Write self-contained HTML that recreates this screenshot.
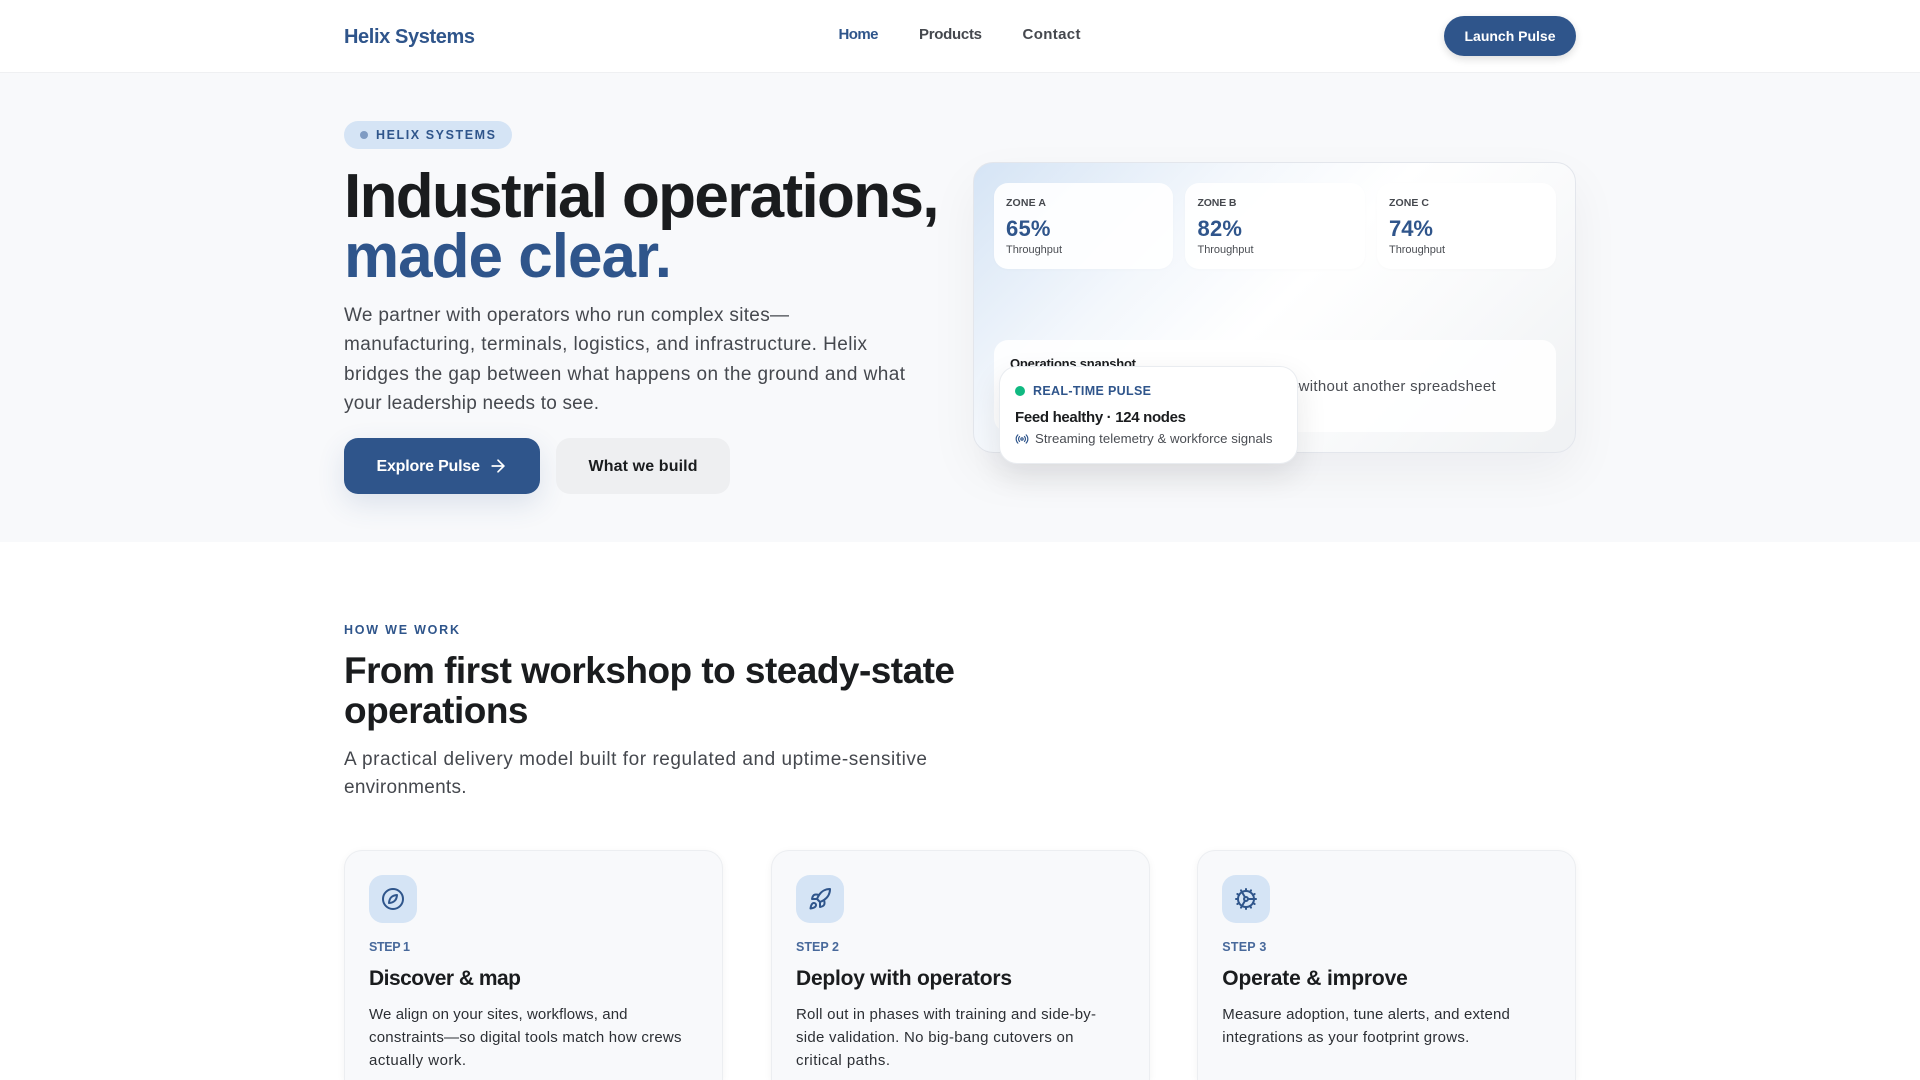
<!DOCTYPE html>
<html lang="en"><head><meta charset="utf-8"><title>Helix Systems</title>
<style>
*{box-sizing:border-box}
html,body{margin:0;padding:0;width:1920px;height:1080px;overflow:hidden;background:#fff;font-family:"Liberation Sans",sans-serif;color:#1a1c1e}
#root{position:relative;width:1920px;height:1080px;overflow:hidden;background:#fff}
.b{position:absolute}
.t{position:absolute;white-space:nowrap;line-height:20px;margin:0;font-weight:400}
.nb{font-weight:700}
.nav{font-size:15px;font-weight:700;color:#45484e}
.zl{font-size:10.5px;font-weight:700;color:#45484e}
.zv{font-size:22px;font-weight:700;color:#2f558b}
.zt{font-size:11px;color:#4a4d53}
.zone{position:absolute;top:183px;height:86px;background:rgba(255,255,255,.9);border-radius:14px;box-shadow:0 1px 3px rgba(26,28,30,.02)}
.p{font-size:19px;color:#45484e}
.card{position:absolute;top:850px;width:379px;height:230px;background:#f8f9fb;border:1px solid #eceef1;border-bottom:0;border-radius:18px 18px 0 0;box-shadow:0 2px 8px rgba(26,28,30,.05)}
.ic{position:absolute;top:875px;width:48px;height:48px;border-radius:14px;background:#d5e4f5;display:flex;align-items:center;justify-content:center}
.ic svg{fill:none;stroke:#2f558b;stroke-width:2;stroke-linecap:round;stroke-linejoin:round}
.st{font-size:12.5px;font-weight:700;color:#48699b}
.ct{font-size:21px;font-weight:700;color:#1a1c1e}
.cb{font-size:15px;color:#2c2f34}
</style></head><body><div id="root">

<div class="b" style="left:0;top:0;width:1920px;height:73px;background:#fff;border-bottom:1px solid #eff0f2"></div>
<div class="t nb" style="left:344px;top:27px;font-size:20px;color:#2f558b;--w:131">Helix Systems</div>
<div class="t nav" style="left:838.5px;top:25px;color:#2f558b;--w:40">Home</div>
<div class="t nav" style="left:919px;top:25px;--w:63">Products</div>
<div class="t nav" style="left:1022.5px;top:25px;--w:58">Contact</div>
<div class="b" style="left:1444px;top:16px;width:132px;height:40px;border-radius:20px;background:#2f558b;box-shadow:0 3px 8px rgba(26,28,30,.15)"></div>
<div class="t nb" style="left:1464.5px;top:26px;font-size:14px;color:#fff;--w:91">Launch Pulse</div>

<div class="b" style="left:0;top:73px;width:1920px;height:469px;background:#f8f9fb"></div>
<div class="b" style="left:344px;top:121px;width:168px;height:28px;border-radius:14px;background:#d5e4f5"></div>
<div class="b" style="left:360px;top:130.5px;width:8px;height:8px;border-radius:50%;background:#7f9bc2"></div>
<div class="t nb" style="left:376px;top:125px;font-size:12.5px;color:#2f558b;--w:119">HELIX SYSTEMS</div>

<h1 class="t nb" style="left:344px;top:166.5px;font-size:62px;line-height:60px;color:#1a1c1e;--w:595.5">Industrial operations,</h1>
<div class="t nb" style="left:344px;top:226.5px;font-size:62px;line-height:60px;color:#2f558b;--w:328">made clear.</div>

<div class="t p" style="left:344px;top:306px;--w:445">We partner with operators who run complex sites—</div>
<div class="t p" style="left:344px;top:335.4px;--w:523">manufacturing, terminals, logistics, and infrastructure. Helix</div>
<div class="t p" style="left:344px;top:364.9px;--w:561">bridges the gap between what happens on the ground and what</div>
<div class="t p" style="left:344px;top:394.3px;--w:255">your leadership needs to see.</div>

<div class="b" style="left:344px;top:438px;width:196px;height:56px;border-radius:14px;background:#2f558b;box-shadow:0 10px 28px rgba(47,85,139,.14)"></div>
<div class="t nb" style="left:376.5px;top:457px;font-size:16px;color:#fff;--w:103.5">Explore Pulse</div>
<svg class="b" style="left:488px;top:456px" width="20" height="20" viewBox="0 0 24 24" fill="none" stroke="#fff" stroke-width="2" stroke-linecap="round" stroke-linejoin="round"><path d="M5 12h14"/><path d="m12 5 7 7-7 7"/></svg>
<div class="b" style="left:556px;top:438px;width:174px;height:56px;border-radius:14px;background:#eeeff1"></div>
<div class="t nb" style="left:588.5px;top:457px;font-size:16px;color:#1a1c1e;--w:109">What we build</div>

<div class="b" style="left:973px;top:162px;width:603px;height:290.5px;border-radius:20px;border:1px solid #e3e6ec;background:linear-gradient(135deg,#d5e4f5 0%,#f3f7fc 30%,#fff 50%,#f9fafb 70%,#eff1f3 100%);box-shadow:0 20px 50px rgba(26,28,30,.05)"></div>

<div class="zone" style="left:994px;width:179px"></div>
<div class="zone" style="left:1185px;width:180px"></div>
<div class="zone" style="left:1377px;width:179px"></div>

<div class="t zl" style="left:1006px;top:192.5px;--w:40">ZONE A</div>
<div class="t zv" style="left:1006px;top:218.5px;--w:44.5">65%</div>
<div class="t zt" style="left:1006px;top:239.5px;--w:56">Throughput</div>

<div class="t zl" style="left:1197.5px;top:192.5px;--w:39">ZONE B</div>
<div class="t zv" style="left:1197.5px;top:218.5px;--w:44.5">82%</div>
<div class="t zt" style="left:1197.5px;top:239.5px;--w:56">Throughput</div>

<div class="t zl" style="left:1389px;top:192.5px;--w:40">ZONE C</div>
<div class="t zv" style="left:1389px;top:218.5px;--w:44">74%</div>
<div class="t zt" style="left:1389px;top:239.5px;--w:56">Throughput</div>

<div class="b" style="left:994px;top:340px;width:562px;height:92px;border-radius:14px;background:rgba(255,255,255,.88)"></div>
<div class="t nb" style="left:1010px;top:354px;font-size:13px;color:#1a1c1e;--w:126">Operations snapshot</div>
<div class="t" style="right:424px;top:377px;font-size:15px;letter-spacing:.3px;color:#4a4d53">Track each zone and shift at a glance—without another spreadsheet</div>

<div class="b" style="left:999px;top:366px;width:298.5px;height:98px;border-radius:18px;background:#fff;border:1px solid #e9ecf0;box-shadow:0 12px 30px rgba(26,28,30,.10)"></div>
<div class="b" style="left:1015px;top:385.5px;width:10px;height:10px;border-radius:50%;background:#10b981"></div>
<div class="t nb" style="left:1033px;top:380.5px;font-size:12.5px;color:#2f558b;--w:118">REAL-TIME PULSE</div>
<div class="t nb" style="left:1015px;top:408px;font-size:15px;color:#1a1c1e;--w:171">Feed healthy · 124 nodes</div>
<svg class="b" style="left:1014.5px;top:432px" width="14" height="14" viewBox="0 0 24 24" fill="none" stroke="#2f558b" stroke-width="2" stroke-linecap="round" stroke-linejoin="round"><path d="M4.9 19.1C1 15.2 1 8.8 4.9 4.9"/><path d="M7.8 16.2c-2.3-2.3-2.3-6.1 0-8.5"/><circle cx="12" cy="12" r="2"/><path d="M16.2 7.8c2.3 2.3 2.3 6.1 0 8.5"/><path d="M19.1 4.9C23 8.8 23 15.1 19.1 19"/></svg>
<div class="t" style="left:1035px;top:429px;font-size:13.2px;color:#4a4d53;--w:237.5">Streaming telemetry &amp; workforce signals</div>

<div class="t nb" style="left:344px;top:619.5px;font-size:12.5px;color:#2f558b;--w:115">HOW WE WORK</div>
<h2 class="t nb" style="left:344px;top:651px;font-size:37px;line-height:40px;color:#1a1c1e;--w:611">From first workshop to steady-state</h2>
<div class="t nb" style="left:344px;top:691px;font-size:37px;line-height:40px;color:#1a1c1e;--w:184.5">operations</div>
<div class="t p" style="left:344px;top:750px;--w:583">A practical delivery model built for regulated and uptime-sensitive</div>
<div class="t p" style="left:344px;top:778px;--w:122.5">environments.</div>

<div class="card" style="left:344px"></div>
<div class="ic" style="left:369px"><svg width="24" height="24" viewBox="0 0 24 24"><circle cx="12" cy="12" r="10"/><path d="M16 8c-.2 2.7-1.1 4.7-2.3 5.8-1.2 1.1-3.1 2-5.7 2.2.2-2.7 1.1-4.7 2.3-5.8 1.2-1.1 3.1-2 5.7-2.2z"/></svg></div>
<div class="t st" style="left:369px;top:936.5px;--w:41">STEP 1</div>
<div class="t ct" style="left:369px;top:968.5px;--w:152">Discover &amp; map</div>
<div class="t cb" style="left:369px;top:1004.5px;--w:258.5">We align on your sites, workflows, and</div>
<div class="t cb" style="left:369px;top:1027.5px;--w:312.5">constraints—so digital tools match how crews</div>
<div class="t cb" style="left:369px;top:1050.5px;--w:97">actually work.</div>

<div class="card" style="left:770.5px"></div>
<div class="ic" style="left:796px"><svg width="24" height="24" viewBox="0 0 24 24"><path d="M4.5 16.5c-1.5 1.26-2 5-2 5s3.74-.5 5-2c.71-.84.7-2.13-.09-2.91a2.18 2.18 0 0 0-2.91-.09z"/><path d="m12 15-3-3a22 22 0 0 1 2-3.95A12.88 12.88 0 0 1 22 2c0 2.72-.78 7.5-6 11a22.35 22.35 0 0 1-4 2z"/><path d="M9 12H4s.55-3.03 2-4c1.62-1.08 5 0 5 0"/><path d="M12 15v5s3.03-.55 4-2c1.08-1.62 0-5 0-5"/></svg></div>
<div class="t st" style="left:796px;top:936.5px;--w:43">STEP 2</div>
<div class="t ct" style="left:796px;top:968.5px;--w:216">Deploy with operators</div>
<div class="t cb" style="left:796px;top:1004.5px;--w:300">Roll out in phases with training and side-by-</div>
<div class="t cb" style="left:796px;top:1027.5px;--w:277.5">side validation. No big-bang cutovers on</div>
<div class="t cb" style="left:796px;top:1050.5px;--w:94">critical paths.</div>

<div class="card" style="left:1197px"></div>
<div class="ic" style="left:1222px"><svg width="24" height="24" viewBox="0 0 24 24"><path d="M12 20a8 8 0 1 0 0-16 8 8 0 0 0 0 16Z"/><path d="M12 14a2 2 0 1 0 0-4 2 2 0 0 0 0 4Z"/><path d="M12 2v2"/><path d="M12 22v-2"/><path d="m17 20.66-1-1.73"/><path d="M11 10.27 7 3.34"/><path d="m20.66 17-1.73-1"/><path d="m3.34 7 1.73 1"/><path d="M14 12h8"/><path d="M2 12h2"/><path d="m20.66 7-1.73 1"/><path d="m3.34 17 1.73-1"/><path d="m17 3.34-1 1.73"/><path d="m11 13.73-4 6.93"/></svg></div>
<div class="t st" style="left:1222.3px;top:936.5px;--w:44">STEP 3</div>
<div class="t ct" style="left:1222.3px;top:968.5px;--w:185.5">Operate &amp; improve</div>
<div class="t cb" style="left:1222.3px;top:1004.5px;--w:287.5">Measure adoption, tune alerts, and extend</div>
<div class="t cb" style="left:1222.3px;top:1027.5px;--w:247">integrations as your footprint grows.</div>

</div>
<script>
document.querySelectorAll('.t').forEach(function(e){
  var w=parseFloat(e.style.getPropertyValue('--w'));
  if(!w)return;
  var r=e.getBoundingClientRect().width,n=e.textContent.length;
  e.style.letterSpacing=((w-r)/(n-1))+'px';
});
</script>
</body></html>
